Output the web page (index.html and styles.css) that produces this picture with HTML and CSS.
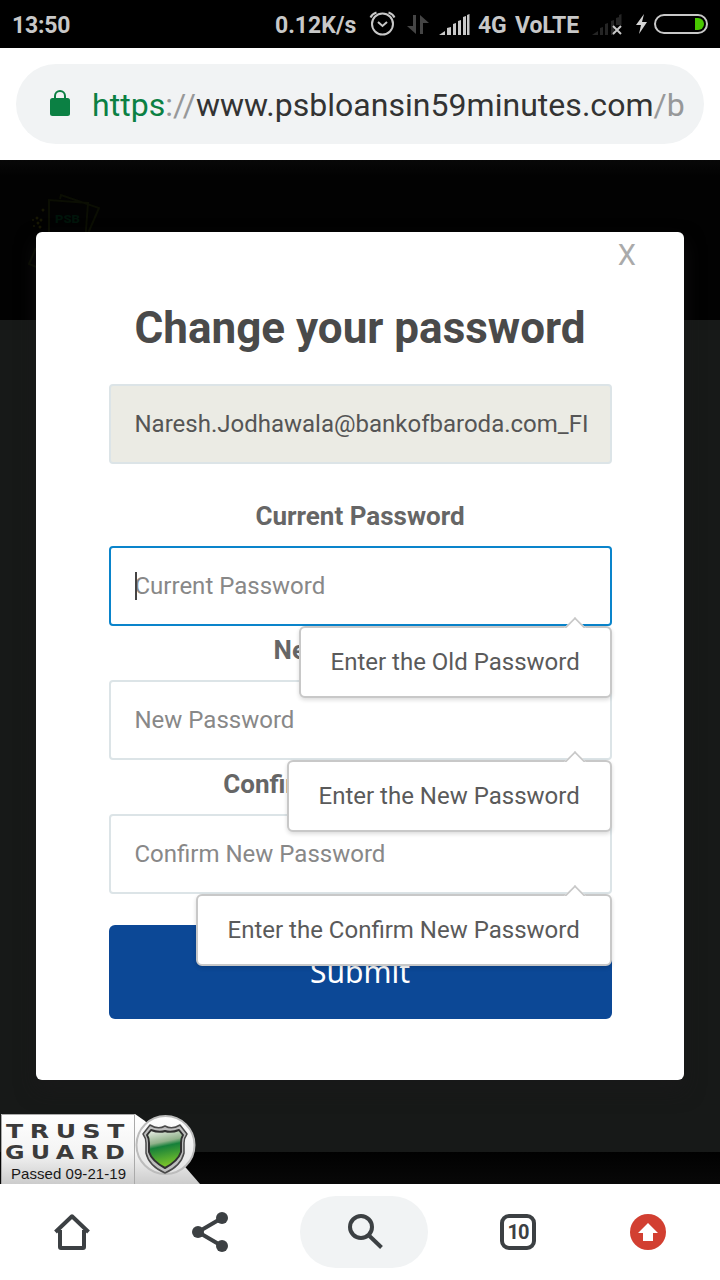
FILE: index.html
```html
<!DOCTYPE html>
<html lang="en">
<head>
<meta charset="utf-8">
<title>Change your password</title>
<link rel="stylesheet" href="styles.css">
</head>
<body>
<header class="status">
  <span class="clock">13:50</span>
  <div class="status-right">
    <span class="rate">0.12K/s</span>
    <svg class="status-icons" width="102" height="30" viewBox="368 9 102 30">
      <g fill="none" stroke="#c8c8c8" stroke-width="2">
        <circle cx="382.500" cy="24" r="10.500"/>
        <path d="M378 22l4.500 4 4.500-4M370.500 17.500Q372 14 376.500 12.500M394.500 17.500Q393 14 388.500 12.500"/>
      </g>
      <path fill="#454545" d="M413 15h3v19l-9-8h6zM420 34V15l9 8h-6v11z"/>
      <path fill="#c8c8c8" d="M439 35l6-4v4zM447 28l4-1v8h-4zM453 24l3-1v12h-3zM458 21l3-1v15h-3zM463 17l3-1v19h-3zM467 15l2.500-1v21H467z"/>
    </svg>
    <span class="network">4G&nbsp; VoLTE</span>
    <svg class="status-icons" width="118" height="30" viewBox="591 9 118 30">
      <path fill="#252525" d="M592 35l6-4v4zM600 28l3-1v8h-3zM605 24l3-1v12h-3zM611 21l3-1v15h-3zM616 18l3-1v8h-3zM619 15l2.500-1v11H619z"/>
      <path d="M613 26l8 8M621 26l-8 8" stroke="#c8c8c8" stroke-width="2"/>
      <path fill="#d4d4d4" d="M644 14l-8 11 5 0-2 9 8-12h-5z"/>
      <rect x="655" y="15" width="52" height="18" rx="9" fill="none" stroke="#c8c8c8" stroke-width="2"/>
      <path fill="#48c800" d="M695 18h3a6 6 0 0 1 0 12h-3z"/>
    </svg>
  </div>
</header>

<div class="toolbar">
  <div class="address">
    <svg width="20" height="28" viewBox="0 0 20 28"><rect y="9" width="20" height="18" rx="2.500" fill="#0b8043"/><path d="M5 10V7a5 5 0 0 1 10 0v3" fill="none" stroke="#0b8043" stroke-width="2"/></svg>
    <span class="url"><span class="scheme">https</span><span class="muted">://</span>www.psbloansin59minutes.com<span class="muted">/b</span></span>
  </div>
</div>

<main class="page">
  <svg class="site-logo" width="80" height="80" viewBox="25 190 80 80">
    <g fill="none" stroke="#0b0e03" stroke-width="2">
      <path d="M49 245V200l39 3-3 40M60 199l1-4 38 13-13 30M36 248l-7 16 10 4"/>
    </g>
    <text x="55" y="223" class="logo-text" textLength="25" lengthAdjust="spacingAndGlyphs">PSB</text>
    <g fill="#171704"><circle cx="43" cy="210" r="1.500"/><circle cx="37" cy="218" r="1.500"/><circle cx="41" cy="220" r="1.500"/><circle cx="38" cy="223" r="1.500"/><circle cx="33" cy="220" r="1"/><circle cx="40" cy="227" r="1.500"/><circle cx="34" cy="226" r="1"/></g>
  </svg>
  <form class="modal">
    <span class="close">X</span>
    <h1 class="title">Change your password</h1>
    <div class="input readonly"><span class="email">Naresh.Jodhawala@bankofbaroda.com_FI</span></div>
    <div class="label first">Current Password</div>
    <div class="input focused"><span class="caret"></span><span>Current Password</span>
      <div class="tip">Enter the Old Password</div>
    </div>
    <div class="label">New Password</div>
    <div class="input"><span>New Password</span>
      <div class="tip">Enter the New Password</div>
    </div>
    <div class="label">Confirm New Password</div>
    <div class="input"><span>Confirm New Password</span>
      <div class="tip">Enter the Confirm New Password</div>
    </div>
    <div class="submit">Submit</div>
  </form>
  <svg class="trust" width="200" height="70" viewBox="0 1114 200 70">
    <defs>
      <linearGradient id="plate" x1="0" y1="0" x2="0" y2="1"><stop offset="0" stop-color="#fff"/><stop offset=".55" stop-color="#f4f4f4"/><stop offset="1" stop-color="#ccc"/></linearGradient>
      <linearGradient id="shield" x1="0" y1="0" x2=".2" y2="1"><stop offset="0" stop-color="#f0f3ee"/><stop offset=".38" stop-color="#91b28b"/><stop offset=".5" stop-color="#16803a"/><stop offset="1" stop-color="#79c32a"/></linearGradient>
      <linearGradient id="ring" x1="0" y1="0" x2="0" y2="1"><stop offset="0" stop-color="#fff"/><stop offset="1" stop-color="#e2e2e2"/></linearGradient>
    </defs>
    <path fill="url(#plate)" d="M1 1114h134l10 7 42 48 13 15H1z"/>
    <path d="M1.500 1184v-69.500h133V1184" fill="none" stroke="#aaa"/>
    <circle cx="165.500" cy="1145" r="29" fill="url(#ring)" stroke="#bcbcbc" stroke-width="2"/>
    <path d="M150 1125q8 5 15 1 7 4 15-1l7 9q-3 4-3 9v10q-3 13-19 20-16-7-19-20v-10q0-5-3-9z" fill="#bdbdbd" stroke="#4a4a4a" stroke-width="1.500" stroke-linejoin="round"/>
    <path d="M151 1130q8 3 14 1 6 2 14-1l4 5q-2 3-2 8v9q-3 9-16 16-13-7-16-16v-9q0-5-2-8z" fill="url(#shield)" stroke="#303030" stroke-width="2" stroke-linejoin="round"/>
    <g class="trust-name"><text x="6" y="1138" textLength="125" lengthAdjust="spacingAndGlyphs">TRUST</text><text x="5" y="1158.500" textLength="126" lengthAdjust="spacingAndGlyphs">GUARD</text></g>
    <text class="trust-date" x="11" y="1179" textLength="115">Passed 09-21-19</text>
  </svg>
</main>

<nav class="bottom">
  <div class="nav-item home"><svg width="38" height="38" viewBox="53 1213 38 38"><path d="M55.500 1232L72 1216.300 88.500 1232M60 1230v17q0 1 1 1h22q1 0 1-1v-17" fill="none" stroke="#3c4043" stroke-width="4" stroke-linejoin="round"/></svg></div>
  <div class="nav-item share"><svg width="38" height="42" viewBox="191 1211 38 42"><path d="M222 1218l-24 14 24 14" fill="none" stroke="#3c4043" stroke-width="4"/><g fill="#3c4043"><circle cx="222" cy="1218" r="6"/><circle cx="198" cy="1232" r="6"/><circle cx="222" cy="1246" r="6"/></g></svg></div>
  <div class="search"><svg width="36" height="36" viewBox="347 1214 36 36"><g fill="none" stroke="#3c4043" stroke-width="4"><circle cx="361" cy="1227" r="11"/><path d="M369.500 1236l12 11.500"/></g></svg></div>
  <div class="tabs">10</div>
  <svg class="update" width="36" height="36" viewBox="0 0 36 36"><circle cx="18" cy="18" r="18" fill="#d23f31"/><path fill="#fff" d="M18 9l10 10h-5v8H13v-8H8z"/></svg>
</nav>
</body>
</html>
```
FILE: styles.css
```css
* { box-sizing: border-box; }
body { margin: 0; width: 720px; height: 1280px; overflow: hidden; display: flex; flex-direction: column; background: #fff; font-family: Roboto, "Noto Sans", sans-serif; }
svg { display: block; flex: none; }

.status { height: 48px; flex: none; background: #000; color: #c8c8c8; display: flex; justify-content: space-between; align-items: center; padding: 2px 11px 0 12px; font-size: 23px; font-weight: 700; white-space: nowrap; }
.status-right { display: flex; align-items: center; }
.status-icons { margin-top: -3px; }
.rate { width: 93px; }
.network { width: 113px; margin-left: 8px; letter-spacing: -.15px; word-spacing: -1.300px; }
.status-right, .clock { line-height: 45px; padding-top: 1px; }
.clock { letter-spacing: -.2px; }

.toolbar { height: 112px; flex: none; padding: 16px; }
.address { height: 80px; border-radius: 40px; background: #f1f3f4; display: flex; align-items: center; gap: 22px; padding: 0 18px 0 34px; }
.address svg { margin-top: -2px; }
.url { font-size: 32px; letter-spacing: .03px; color: #333; white-space: nowrap; padding-top: 2px; }
.scheme { color: #0b8043; }
.muted { color: #979899; }

.page { height: 1024px; flex: none; position: relative; padding: 72px 36px; background: linear-gradient(#080808 0, #020202 16px, #020202 160px, #171918 160px, #171918 992px, #010101 992px, #080808); }
.site-logo { position: absolute; left: 25px; top: 30px; }
.logo-text { font: 900 11px Roboto, sans-serif; fill: #00140a; }
.modal { position: relative; height: 848px; background: #fff; border-radius: 6px; padding: 64px 72px 0 73px; box-shadow: 0 10px 20px rgba(27, 25, 26, .6); }
.close { position: absolute; right: 48px; top: 6px; font-size: 29px; line-height: 35px; color: #aaa; }
.title { margin: 0 1px 24px 0; height: 64px; line-height: 64px; font-size: 44px; font-weight: 700; color: #4a4a4a; text-align: center; white-space: nowrap; }
.input { position: relative; height: 80px; border: 2px solid #dce4e7; border-radius: 4px; padding: 0 24px 0 23.500px; font-size: 24px; line-height: 76px; color: #888; white-space: nowrap; }
.readonly { background: #ebebe4; color: #555; }
.focused { border-color: #0a84cb; }
.caret { position: absolute; left: 24px; top: 24px; width: 2px; height: 28px; background: #444; }
.label { height: 54px; line-height: 48px; text-align: center; font-size: 26px; font-weight: 700; color: #666; padding-right: 1px; }
.first { height: 82px; padding-top: 28px; }
.tip { position: absolute; z-index: 2; right: -2px; top: 78px; height: 72px; border: 2px solid #c8c8c8; border-radius: 6px; background: #fff; padding: 0 30.300px 0 29.500px; line-height: 68px; color: #5a5a5a; box-shadow: 0 2px 4px rgba(0, 0, 0, .14); }
.tip::before { content: ""; position: absolute; width: 14px; height: 14px; right: 27px; top: -8px; transform: rotate(45deg); background: #fff; border: 2px solid #c8c8c8; border-right: 0; border-bottom: 0; clip-path: polygon(0 0, 100% 0, 0 100%); }
.submit { height: 94px; margin-top: 31px; border-radius: 6px; background: #0c4896; color: #fff; text-align: center; font: 30px/94px "Noto Sans", sans-serif; padding-right: 1px; }
.trust { position: absolute; left: 0; bottom: 0; }
.trust-name { font: 700 19px "DejaVu Sans", sans-serif; letter-spacing: 5px; fill: #3b3b3b; }
.trust-date { font: 15px "Liberation Sans", sans-serif; fill: #181818; }

.bottom { height: 96px; flex: none; display: flex; align-items: center; padding: 0 54px 0 53px; }
.home { width: 138px; }
.share { width: 109px; }
.search { width: 128px; height: 72px; border-radius: 36px; background: #f1f3f4; display: flex; align-items: center; justify-content: center; padding-left: 2px; }
.tabs { width: 36px; height: 36px; margin-left: 72px; border: 4px solid #3c4043; border-radius: 9px; font: 700 20px/29px "Roboto", sans-serif; letter-spacing: -1px; text-align: center; color: #3c4043; }
.update { margin-left: 94px; }
```
